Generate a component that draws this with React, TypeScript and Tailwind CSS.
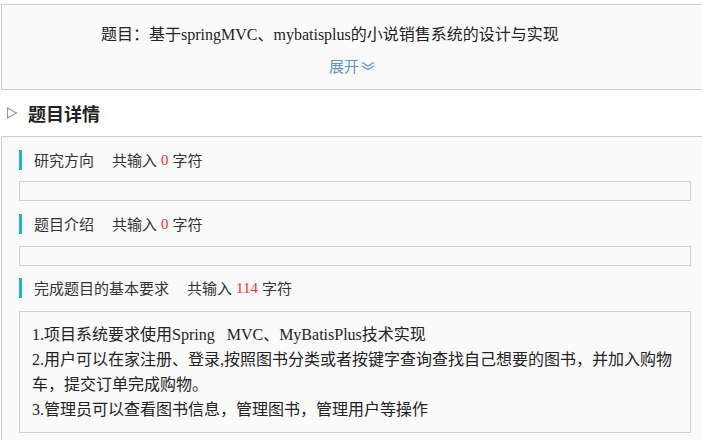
import React from "react";

const serif = { fontFamily: '"Liberation Serif", "Noto Sans CJK SC", serif' };

function Label({ title, count }: { title: string; count: number }) {
  return (
    <div className="flex items-center h-[22px]">
      <div className="w-[3px] h-[20px] bg-[#1cb5d4]" />
      <div className="ml-[12px] text-[15px] text-[#333] flex items-center" style={{ fontFamily: '"Noto Sans CJK SC", sans-serif' }}>
        <span>{title}</span>
        <span className="ml-[18px]">共输入</span>
        <span className="ml-[4px] text-[#ff2a2a]" style={serif}>{count}</span>
        <span className="ml-[4px]">字符</span>
      </div>
    </div>
  );
}

export default function App() {
  return (
    <div className="w-[702px] h-[440px] bg-white overflow-hidden pt-[4px] pl-[1px]">
      <div className="h-[86px] bg-[#fafafa] border-y border-l border-[#cfcfcf] flex flex-col items-center">
        <div className="self-start ml-[99px] mt-[19px] text-[16px] leading-[22px] text-[#222]" style={serif}>
          题目：基于springMVC、mybatisplus的小说销售系统的设计与实现
        </div>
        <div className="mt-[10px] flex items-center text-[15px] leading-[20px] text-[#5b95cf]" style={{ fontFamily: '"Noto Sans CJK SC", sans-serif' }}>
          <span>展开</span>
          <svg width="14" height="10" viewBox="0 0 14 10" className="ml-[2px]" fill="none" stroke="#5b95cf" strokeWidth="1.2">
            <path d="M1 1.5 L7 5 L13 1.5" />
            <path d="M1 5 L7 8.5 L13 5" />
          </svg>
        </div>
      </div>
      <div className="flex items-center h-[46px] pl-[5px]">
        <svg width="12" height="12" viewBox="0 0 12 12" fill="none" stroke="#999" strokeWidth="1.2">
          <path d="M1.5 1 L10.5 6 L1.5 11 Z" />
        </svg>
        <span className="ml-[10px] text-[18px] font-bold text-[#222]" style={{ fontFamily: '"Noto Sans CJK SC", sans-serif' }}>
          题目详情
        </span>
      </div>
      <div className="bg-[#fafafa] border-t border-l border-[#cfcfcf] h-[400px] pl-[17px] pr-[11px] pt-[12px]">
        <Label title="研究方向" count={0} />
        <div className="mt-[10px] h-[20px] border border-[#d0d0d0] bg-[#fafafa]" />
        <div className="mt-[12px]"><Label title="题目介绍" count={0} /></div>
        <div className="mt-[11px] h-[20px] border border-[#d0d0d0] bg-[#fafafa]" />
        <div className="mt-[11px]"><Label title="完成题目的基本要求" count={114} /></div>
        <div className="mt-[12px] border border-[#d0d0d0] bg-[#fafafa] px-[12px] py-[10px] text-[16px] leading-[25px] text-[#222]" style={serif}>
          <div>1.项目系统要求使用Spring&nbsp;&nbsp; MVC、MyBatisPlus技术实现</div>
          <div>2.用户可以在家注册、登录,按照图书分类或者按键字查询查找自己想要的图书，并加入购物车，提交订单完成购物。</div>
          <div>3.管理员可以查看图书信息，管理图书，管理用户等操作</div>
        </div>
      </div>
    </div>
  );
}
